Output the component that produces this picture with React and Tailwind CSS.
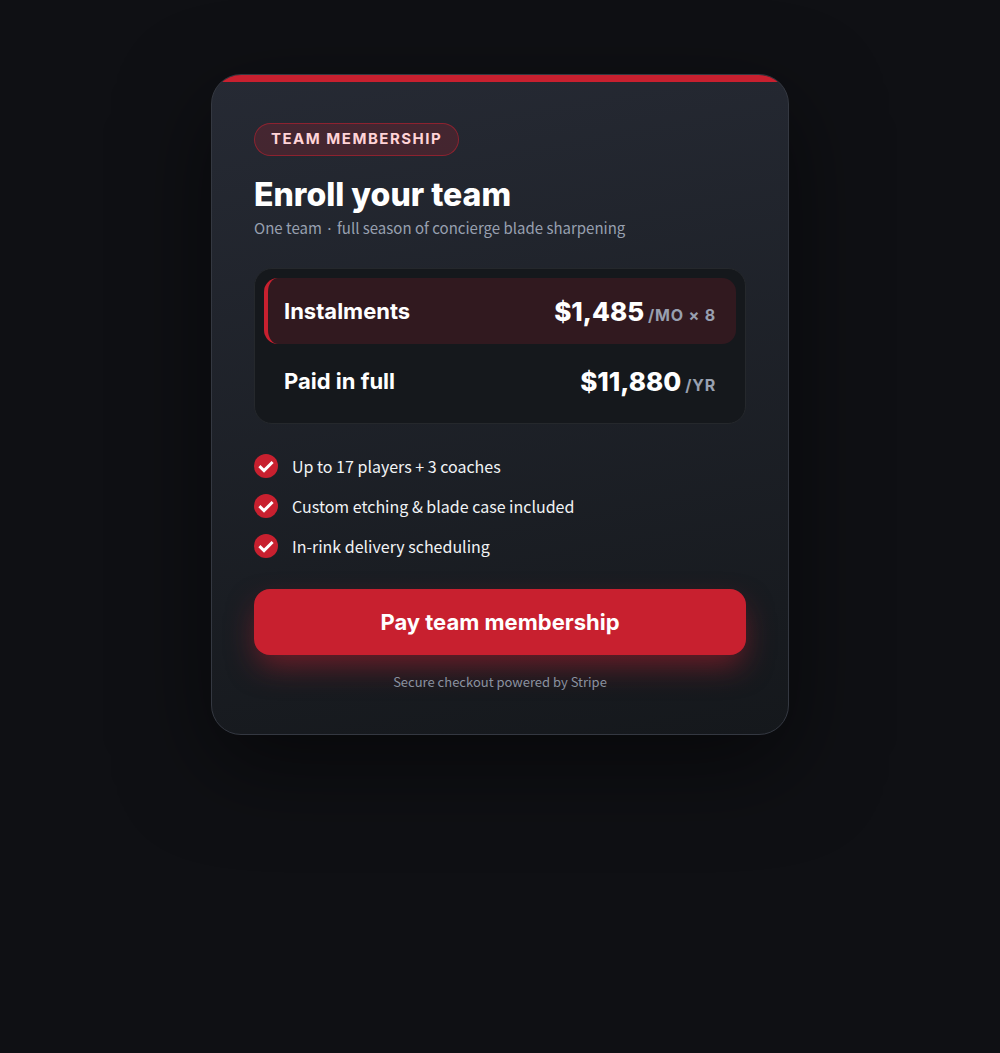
const PLANS = [
  { id: "instalments", name: "Instalments", price: "$1,485", unit: "/MO × 8" },
  { id: "full", name: "Paid in full", price: "$11,880", unit: "/YR" },
];

const FEATURES = [
  "Up to 17 players + 3 coaches",
  "Custom etching & blade case included",
  "In-rink delivery scheduling",
];

function CheckBadge() {
  return (
    <svg viewBox="0 0 24 24" className="size-6 shrink-0" aria-hidden="true">
      <circle cx="12" cy="12" r="12" fill="#c8202f" />
      <path d="M5.4 12.2 10 16.6 18.6 8" fill="none" stroke="#fff" strokeWidth="3" />
    </svg>
  );
}

function Plan({ plan, selected }) {
  return (
    <label className="relative flex h-[66px] cursor-pointer items-center justify-between rounded-[14px] border-l-4 border-transparent pr-5 pl-4 has-checked:border-[#c8202f] has-checked:bg-[#c8202f]/16">
      <input type="radio" name="plan" value={plan.id} defaultChecked={selected} className="sr-only" />
      <span className="text-[22px] font-bold">{plan.name}</span>
      <span className="flex items-baseline gap-1">
        <span className="text-[26px] font-extrabold">{plan.price}</span>
        <span className="text-base font-bold tracking-wider text-[#98a0b0]">{plan.unit}</span>
      </span>
    </label>
  );
}

export default function App() {
  return (
    <div className="min-h-screen bg-[#0f1014] px-6 pt-[74px] pb-20 font-['Inter',sans-serif] text-white">
      <main className="relative mx-auto max-w-[578px] overflow-hidden rounded-[30px] border border-[#343841] bg-linear-170 from-[#262a34] to-[#15181c] px-[42px] pt-12 pb-10 shadow-[0_30px_90px_rgba(0,0,0,0.5)]">
        <div className="absolute inset-x-0 top-0 h-[7px] bg-[#c8202f]" />
        <p className="flex h-[33px] w-fit items-center rounded-full border border-[#c8202f]/55 bg-[#c8202f]/20 px-4 text-[15px] font-bold tracking-widest text-[#ffd3d7]">
          TEAM MEMBERSHIP
        </p>
        <h1 className="mt-5 text-[32px] leading-[38px] font-extrabold">Enroll your team</h1>
        <p className="mt-0.5 font-['Noto_Sans_CJK_JP',sans-serif] text-[15px] leading-6 text-[#98a0b0]">
          One team · full season of concierge blade sharpening
        </p>

        <div
          role="radiogroup"
          aria-label="Payment plan"
          className="mt-7 flex flex-col gap-1 rounded-[18px] border border-[#25282c] bg-[#15181c] p-[9px]"
        >
          {PLANS.map((plan, i) => (
            <Plan key={plan.id} plan={plan} selected={i === 0} />
          ))}
        </div>

        <ul className="mt-[30px] flex flex-col gap-4 font-['Noto_Sans_CJK_JP',sans-serif] text-base leading-6 text-[#f1f3f5]">
          {FEATURES.map((feature) => (
            <li key={feature} className="flex items-center gap-3.5">
              <CheckBadge />
              {feature}
            </li>
          ))}
        </ul>

        <button
          type="button"
          className="mt-[31px] h-[66px] w-full cursor-pointer rounded-2xl bg-[#c8202f] text-[22px] font-bold shadow-[0_14px_30px_-4px_rgba(200,32,47,0.5)]"
        >
          Pay team membership
        </button>
        <p className="mt-[15px] text-center font-['Noto_Sans_CJK_JP',sans-serif] text-[13px] leading-6 text-[#8a92a0]">
          Secure checkout powered by Stripe
        </p>
      </main>
    </div>
  );
}
